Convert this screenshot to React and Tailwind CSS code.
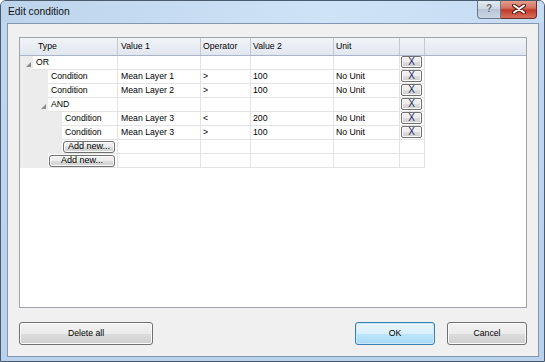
import React from "react";

const rows = [
    { level: 0, type: "OR", expander: true },
    { level: 1, type: "Condition", v1: "Mean Layer 1", op: ">", v2: "100", unit: "No Unit" },
    { level: 1, type: "Condition", v1: "Mean Layer 2", op: ">", v2: "100", unit: "No Unit" },
    { level: 1, type: "AND", expander: true },
    { level: 2, type: "Condition", v1: "Mean Layer 3", op: "<", v2: "200", unit: "No Unit" },
    { level: 2, type: "Condition", v1: "Mean Layer 3", op: ">", v2: "100", unit: "No Unit" },
    { level: 2, add: true },
    { level: 1, add: true },
];

const indentWidth = ["w-[13px]", "w-[28px]", "w-[42px]"];

const btnFace =
    "border border-[#707070] bg-[linear-gradient(to_bottom,#f2f2f2_0%,#ebebeb_50%,#dddddd_50%,#cfcfcf_100%)] shadow-[inset_0_0_0_1px_#fbfbfb]";

const Expander = () => (
    <svg width="5" height="5" viewBox="0 0 5 5" className="mr-[2px] mb-[1px]">
        <polygon points="5,0 5,5 0,5" fill="#8a8a8a" />
    </svg>
);

const TreeRow = ({ row }) => {
    return (
        <div className="flex h-[14px]">
            {/* Type column with indent */}
            <div className="flex w-[98px] shrink-0 border-r border-[#e3e3e3]">
                <div className={`${indentWidth[row.level]} shrink-0 bg-[#ececec] flex items-end justify-end pb-[2px]`}>
                    {row.expander && <Expander />}
                </div>
                {row.add ? (
                    <div className="flex-1 border-b border-[#e3e3e3] pl-[1px] pr-[2px] flex items-center">
                        <div className={`${btnFace} w-full h-[12px] rounded-[3px] flex items-center justify-center leading-none text-[9px]`}>
                            Add new...
                        </div>
                    </div>
                ) : (
                    <div className="flex-1 border-b border-[#e3e3e3] pl-[3px] flex items-center leading-none">
                        {row.type}
                    </div>
                )}
            </div>
            <div className="w-[83px] shrink-0 border-r border-b border-[#e3e3e3] pl-[3px] flex items-center leading-none">{row.v1}</div>
            <div className="w-[50px] shrink-0 border-r border-b border-[#e3e3e3] pl-[2px] flex items-center leading-none">{row.op}</div>
            <div className="w-[83px] shrink-0 border-r border-b border-[#e3e3e3] pl-[2px] flex items-center leading-none">{row.v2}</div>
            <div className="w-[66px] shrink-0 border-r border-b border-[#e3e3e3] pl-[2px] flex items-center leading-none">{row.unit}</div>
            <div className="w-[25px] shrink-0 border-r border-b border-[#e3e3e3] pl-[1px] flex items-start">
                {!row.add && (
                    <div className={`${btnFace} w-[21px] h-[12px] rounded-[2px] flex items-center justify-center leading-none text-[10px] text-[#1b2a5c]`}>
                        X
                    </div>
                )}
            </div>
        </div>
    );
};

const Header = () => {
    const cols = [
        { label: "Type", w: "w-[98px]", pl: "pl-[18px]" },
        { label: "Value 1", w: "w-[83px]", pl: "pl-[3px]" },
        { label: "Operator", w: "w-[50px]", pl: "pl-[2px]" },
        { label: "Value 2", w: "w-[83px]", pl: "pl-[2px]" },
        { label: "Unit", w: "w-[66px]", pl: "pl-[2px]" },
        { label: "", w: "w-[25px]", pl: "" },
    ];
    return (
        <div className="flex h-[18px] border-b border-[#a9b5c6] bg-[linear-gradient(to_bottom,#f1f4f8,#e1e7ef)]">
            {cols.map((c, i) => (
                <div key={i} className={`${c.w} ${c.pl} shrink-0 border-r border-[#c4cad3] flex items-center leading-none`}>
                    {c.label}
                </div>
            ))}
        </div>
    );
};

export default function App() {
    return (
        <div className="w-[545px] h-[362px] flex flex-col border border-[#4b5b6e] rounded-t-[6px] overflow-hidden bg-[linear-gradient(to_bottom,#c0d7ef,#b8d1ec)] font-['Liberation_Sans',Arial,sans-serif] text-[8.7px] text-black">
            {/* Title bar */}
            <div className="h-[22px] flex shrink-0 bg-[linear-gradient(to_right,#bdd4ec,#cfe3f7_60%,#c6dcf3)]">
                <div className="self-center pl-[7px] pb-[1px] text-[10.3px] text-[#111]">Edit condition</div>
                <div className="ml-auto mr-[7px] -mt-px flex h-[19px]">
                    <div className="w-[24px] h-full border border-[#69788a] border-t-0 rounded-bl-[4px] bg-[linear-gradient(to_bottom,#e6ecf3,#cbd6e3_50%,#b6c5d6_51%,#c9d6e4)] flex items-center justify-center">
                        <span className="font-bold text-[10px] leading-none text-[#59626d] [text-shadow:0_0_1px_#fff]">?</span>
                    </div>
                    <div className="w-[36px] h-full border border-[#6d2c24] border-t-0 border-l-0 rounded-br-[4px] bg-[linear-gradient(to_bottom,#e9a597,#d3705e_45%,#c0392b_55%,#d8705c)] flex items-center justify-center">
                        <svg width="14" height="10" viewBox="0 0 14 10">
                            <path d="M2 1.5 L12 8.5 M12 1.5 L2 8.5" stroke="#5a1d16" strokeWidth="4" strokeLinecap="round" />
                            <path d="M2 1.5 L12 8.5 M12 1.5 L2 8.5" stroke="#ffffff" strokeWidth="2" strokeLinecap="round" />
                        </svg>
                    </div>
                </div>
            </div>

            {/* Client area */}
            <div className="flex-1 ml-[6px] mr-[5px] mb-[4px] border border-[#8397b0] bg-[#f0f0f0] flex flex-col pt-[13px] pb-[11px] px-[11px]">
                {/* Grid panel */}
                <div className="h-[271px] shrink-0 border border-[#a0a4aa] bg-white flex flex-col">
                    <Header />
                    {rows.map((row, i) => (
                        <TreeRow key={i} row={row} />
                    ))}
                </div>

                {/* Buttons */}
                <div className="mt-[14px] flex justify-between">
                    <div className={`${btnFace} w-[134px] h-[23px] rounded-[3px] flex items-center justify-center`}>
                        Delete all
                    </div>
                    <div className="flex gap-[12px]">
                        <div className="w-[80px] h-[23px] rounded-[3px] border border-[#3c7fb1] bg-[linear-gradient(to_bottom,#eaf6fd_0%,#d9f0fc_50%,#bee6fd_50%,#a7d9f5_100%)] shadow-[inset_0_0_0_1px_#c8e8fa] flex items-center justify-center">
                            OK
                        </div>
                        <div className={`${btnFace} w-[80px] h-[23px] rounded-[3px] flex items-center justify-center`}>
                            Cancel
                        </div>
                    </div>
                </div>
            </div>
        </div>
    );
}
